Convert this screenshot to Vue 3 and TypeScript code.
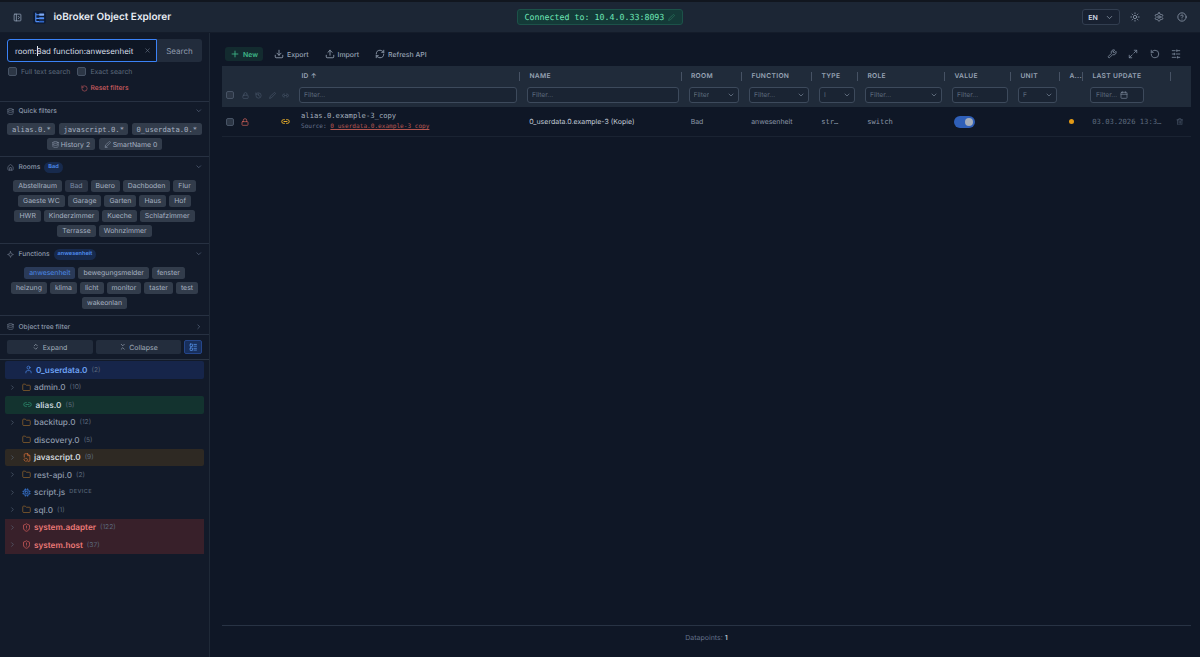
<script setup lang="ts">
interface TreeRow {
  label: string
  count?: string
  icon: string
  tone: string
  arrow: boolean
  tag?: string
}
const quick = ['alias.0.*', 'javascript.0.*', '0_userdata.0.*']
const rooms = ['Abstellraum', 'Bad', 'Buero', 'Dachboden', 'Flur', 'Gaeste WC', 'Garage', 'Garten', 'Haus', 'Hof', 'HWR', 'Kinderzimmer', 'Kueche', 'Schlafzimmer', 'Terrasse', 'Wohnzimmer']
const functions = ['anwesenheit', 'bewegungsmelder', 'fenster', 'heizung', 'klima', 'licht', 'monitor', 'taster', 'test', 'wakeonlan']
const tree: TreeRow[] = [
  { label: '0_userdata.0', count: '(2)', icon: 'user', tone: 'blue', arrow: false },
  { label: 'admin.0', count: '(10)', icon: 'folder', tone: 'plain', arrow: true },
  { label: 'alias.0', count: '(5)', icon: 'link', tone: 'green', arrow: false },
  { label: 'backitup.0', count: '(12)', icon: 'folder', tone: 'plain', arrow: true },
  { label: 'discovery.0', count: '(5)', icon: 'folder', tone: 'plain', arrow: false },
  { label: 'javascript.0', count: '(9)', icon: 'filecode', tone: 'amber', arrow: true },
  { label: 'rest-api.0', count: '(2)', icon: 'folder', tone: 'plain', arrow: true },
  { label: 'script.js', icon: 'chip', tone: 'plain', arrow: true, tag: 'DEVICE' },
  { label: 'sql.0', count: '(1)', icon: 'folder', tone: 'plain', arrow: true },
  { label: 'system.adapter', count: '(122)', icon: 'shield', tone: 'red', arrow: true },
  { label: 'system.host', count: '(37)', icon: 'shield', tone: 'red', arrow: true }
]
const columns = [
  { label: 'ID ↑', filter: 'text', ph: 'Filter...' },
  { label: 'NAME', filter: 'text', ph: 'Filter...' },
  { label: 'ROOM', filter: 'select', ph: 'Filter' },
  { label: 'FUNCTION', filter: 'select', ph: 'Filter...' },
  { label: 'TYPE', filter: 'select', ph: 'I' },
  { label: 'ROLE', filter: 'select', ph: 'Filter...' },
  { label: 'VALUE', filter: 'text', ph: 'Filter...' },
  { label: 'UNIT', filter: 'select', ph: 'F' },
  { label: 'A...', filter: 'none', ph: '' },
  { label: 'LAST UPDATE', filter: 'date', ph: 'Filter...' }
]
</script>

<template>
  <div class="app">
    <svg class="defs" aria-hidden="true">
      <symbol id="i-panel" viewBox="0 0 24 24"><rect x="3" y="3" width="18" height="18" rx="2"/><path d="M9 3v18M14 9l3 3-3 3"/></symbol>
      <symbol id="i-plus" viewBox="0 0 24 24"><path d="M5 12h14M12 5v14"/></symbol>
      <symbol id="i-download" viewBox="0 0 24 24"><path d="M12 15V3M21 15v4a2 2 0 0 1-2 2H5a2 2 0 0 1-2-2v-4M7 10l5 5 5-5"/></symbol>
      <symbol id="i-upload" viewBox="0 0 24 24"><path d="M12 3v12M17 8l-5-5-5 5M21 15v4a2 2 0 0 1-2 2H5a2 2 0 0 1-2-2v-4"/></symbol>
      <symbol id="i-refresh" viewBox="0 0 24 24"><path d="M3 12a9 9 0 0 1 9-9 9.75 9.75 0 0 1 6.74 2.74L21 8M21 3v5h-5M21 12a9 9 0 0 1-9 9 9.75 9.75 0 0 1-6.74-2.74L3 16M8 16H3v5"/></symbol>
      <symbol id="i-wrench" viewBox="0 0 24 24"><path d="M14.7 6.3a1 1 0 0 0 0 1.4l1.6 1.6a1 1 0 0 0 1.4 0l3.77-3.77a6 6 0 0 1-7.94 7.94l-6.91 6.91a2.12 2.12 0 0 1-3-3l6.91-6.91a6 6 0 0 1 7.94-7.94l-3.76 3.76z"/></symbol>
      <symbol id="i-max" viewBox="0 0 24 24"><path d="M15 3h6v6M9 21H3v-6M21 3l-7 7M3 21l7-7"/></symbol>
      <symbol id="i-rotate" viewBox="0 0 24 24"><path d="M3 12a9 9 0 1 0 9-9 9.75 9.75 0 0 0-6.74 2.74L3 8M3 3v5h5"/></symbol>
      <symbol id="i-sliders" viewBox="0 0 24 24"><path d="M21 4h-7M10 4H3M21 12h-9M8 12H3M21 20h-5M12 20H3M14 2v4M8 10v4M16 18v4"/></symbol>
      <symbol id="i-lock" viewBox="0 0 24 24"><rect x="3" y="11" width="18" height="11" rx="2"/><path d="M7 11V7a5 5 0 0 1 10 0v4"/></symbol>
      <symbol id="i-history" viewBox="0 0 24 24"><path d="M3 12a9 9 0 1 0 9-9 9.75 9.75 0 0 0-6.74 2.74L3 8M3 3v5h5M12 7v5l4 2"/></symbol>
      <symbol id="i-pen" viewBox="0 0 24 24"><path d="M17 3a2.85 2.83 0 1 1 4 4L7.5 20.5 2 22l1.5-5.5Z"/></symbol>
      <symbol id="i-link" viewBox="0 0 24 24"><path d="M9 17H7A5 5 0 0 1 7 7h2M15 7h2a5 5 0 1 1 0 10h-2M8 12h8"/></symbol>
      <symbol id="i-trash" viewBox="0 0 24 24"><path d="M3 6h18M19 6v14a2 2 0 0 1-2 2H7a2 2 0 0 1-2-2V6M8 6V4a2 2 0 0 1 2-2h4a2 2 0 0 1 2 2v2M10 11v6M14 11v6"/></symbol>
      <symbol id="i-calendar" viewBox="0 0 24 24"><rect x="3" y="4" width="18" height="18" rx="2"/><path d="M16 2v4M8 2v4M3 10h18"/></symbol>
      <symbol id="i-down" viewBox="0 0 24 24"><path d="m6 9 6 6 6-6"/></symbol>
      <symbol id="i-right" viewBox="0 0 24 24"><path d="m9 18 6-6-6-6"/></symbol>
      <symbol id="i-folder" viewBox="0 0 24 24"><path d="M20 20a2 2 0 0 0 2-2V8a2 2 0 0 0-2-2h-7.9a2 2 0 0 1-1.69-.9L9.6 3.9A2 2 0 0 0 7.93 3H4a2 2 0 0 0-2 2v13a2 2 0 0 0 2 2Z"/></symbol>
      <symbol id="i-user" viewBox="0 0 24 24"><path d="M19 21v-2a4 4 0 0 0-4-4H9a4 4 0 0 0-4 4v2"/><circle cx="12" cy="7" r="4"/></symbol>
      <symbol id="i-shield" viewBox="0 0 24 24"><path d="M20 13c0 5-3.5 7.5-7.66 8.95a1 1 0 0 1-.67-.01C7.5 20.5 4 18 4 13V6a1 1 0 0 1 1-1c2 0 4.5-1.2 6.24-2.72a1.17 1.17 0 0 1 1.52 0C14.51 3.81 17 5 19 5a1 1 0 0 1 1 1zM12 8v4M12 16h.01"/></symbol>
      <symbol id="i-sun" viewBox="0 0 24 24"><circle cx="12" cy="12" r="4"/><path d="M12 2v2M12 20v2M4.93 4.93l1.41 1.41M17.66 17.66l1.41 1.41M2 12h2M20 12h2M6.34 17.66l-1.41 1.41M19.07 4.93l-1.41 1.41"/></symbol>
      <symbol id="i-gear" viewBox="0 0 24 24"><path d="M12.22 2h-.44a2 2 0 0 0-2 2v.18a2 2 0 0 1-1 1.73l-.43.25a2 2 0 0 1-2 0l-.15-.08a2 2 0 0 0-2.73.73l-.22.38a2 2 0 0 0 .73 2.73l.15.1a2 2 0 0 1 1 1.72v.51a2 2 0 0 1-1 1.74l-.15.09a2 2 0 0 0-.73 2.73l.22.38a2 2 0 0 0 2.73.73l.15-.08a2 2 0 0 1 2 0l.43.25a2 2 0 0 1 1 1.73V20a2 2 0 0 0 2 2h.44a2 2 0 0 0 2-2v-.18a2 2 0 0 1 1-1.73l.43-.25a2 2 0 0 1 2 0l.15.08a2 2 0 0 0 2.73-.73l.22-.39a2 2 0 0 0-.73-2.73l-.15-.08a2 2 0 0 1-1-1.74v-.5a2 2 0 0 1 1-1.74l.15-.09a2 2 0 0 0 .73-2.73l-.22-.38a2 2 0 0 0-2.73-.73l-.15.08a2 2 0 0 1-2 0l-.43-.25a2 2 0 0 1-1-1.73V4a2 2 0 0 0-2-2z"/><circle cx="12" cy="12" r="3"/></symbol>
      <symbol id="i-help" viewBox="0 0 24 24"><circle cx="12" cy="12" r="10"/><path d="M9.09 9a3 3 0 0 1 5.83 1c0 2-3 3-3 3M12 17h.01"/></symbol>
      <symbol id="i-db" viewBox="0 0 24 24"><ellipse cx="12" cy="5" rx="9" ry="3"/><path d="M3 5v14a9 3 0 0 0 18 0V5M3 12a9 3 0 0 0 18 0"/></symbol>
      <symbol id="i-home" viewBox="0 0 24 24"><path d="M15 21v-8a1 1 0 0 0-1-1h-4a1 1 0 0 0-1 1v8M3 10a2 2 0 0 1 .709-1.528l7-5.999a2 2 0 0 1 2.582 0l7 5.999A2 2 0 0 1 21 10v9a2 2 0 0 1-2 2H5a2 2 0 0 1-2-2z"/></symbol>
      <symbol id="i-func" viewBox="0 0 24 24"><path d="M12 2l2.8 7.2L22 12l-7.2 2.8L12 22l-2.8-7.2L2 12l7.2-2.8z"/></symbol>
      <symbol id="i-expand" viewBox="0 0 24 24"><path d="m7 15 5 5 5-5M7 9l5-5 5 5"/></symbol>
      <symbol id="i-collapse" viewBox="0 0 24 24"><path d="m7 20 5-5 5 5M7 4l5 5 5-5"/></symbol>
      <symbol id="i-x" viewBox="0 0 24 24"><path d="M18 6 6 18M6 6l12 12"/></symbol>
      <symbol id="i-tag" viewBox="0 0 24 24"><path d="M17 3a2.85 2.83 0 1 1 4 4L9 19l-5 1 1-5z"/><path d="M4 22h7"/></symbol>
      <symbol id="i-filecode" viewBox="0 0 24 24"><path d="M6 11V4a2 2 0 0 1 2-2h8l5 5v13a2 2 0 0 1-2 2h-3"/><path d="M15 2v5h5M9 14l-4 4 4 4M12 14l3 4-3 4"/></symbol>
      <symbol id="i-chip" viewBox="0 0 24 24"><rect x="5" y="5" width="14" height="14" rx="3"/><rect x="9" y="9" width="6" height="6" rx="1"/><path d="M9 2v3M15 2v3M9 19v3M15 19v3M2 9h3M2 15h3M19 9h3M19 15h3"/></symbol>
      <symbol id="i-columns" viewBox="0 0 24 24"><rect x="3" y="3" width="7" height="7" rx="1"/><rect x="3" y="14" width="7" height="7" rx="1"/><path d="M14 4h7M14 9h7M14 15h7M14 20h7"/></symbol>
    </svg>

    <header class="topbar">
      <div class="brand">
        <svg class="ic panel-ic"><use href="#i-panel"/></svg>
        <span class="logo">
          <svg viewBox="0 0 14 14" class="logo-svg">
            <path d="M3 2v9.5M3 4h4M3 8h4M3 11.5h4" stroke="#4f8df7" stroke-width="1.2" fill="none"/>
            <rect x="6.6" y="2.8" width="5.4" height="2.2" rx=".6" fill="#7ea9f5"/>
            <rect x="6.6" y="6.8" width="5.4" height="2.2" rx=".6" fill="#4f8df7"/>
            <rect x="6.6" y="10.4" width="5.4" height="2" rx=".6" fill="#2f66c9"/>
          </svg>
        </span>
        <h1>ioBroker Object Explorer</h1>
      </div>
      <div class="conn">
        <span>Connected to: 10.4.0.33:8093</span>
        <svg class="ic conn-pen"><use href="#i-pen"/></svg>
      </div>
      <div class="top-actions">
        <div class="lang"><span>EN</span><svg class="ic lang-ch"><use href="#i-down"/></svg></div>
        <svg class="ic top-ic"><use href="#i-sun"/></svg>
        <svg class="ic top-ic"><use href="#i-gear"/></svg>
        <svg class="ic top-ic"><use href="#i-help"/></svg>
      </div>
    </header>

    <div class="body">
      <aside class="sidebar">
        <section class="search">
          <div class="search-row">
            <div class="search-input">
              <span class="search-text">room:<i class="caret"></i>Bad function:anwesenheit</span>
              <svg class="ic clear"><use href="#i-x"/></svg>
            </div>
            <div class="search-btn">Search</div>
          </div>
          <div class="checks">
            <label><i class="box"></i>Full text search</label>
            <label><i class="box"></i>Exact search</label>
          </div>
          <div class="reset"><svg class="ic reset-ic"><use href="#i-rotate"/></svg>Reset filters</div>
        </section>

        <section class="panel quick">
          <div class="panel-head">
            <svg class="ic head-ic"><use href="#i-db"/></svg>
            <span>Quick filters</span>
            <svg class="ic head-ch"><use href="#i-down"/></svg>
          </div>
          <div class="chips">
            <span v-for="q in quick" :key="q" class="chip mono">{{ q }}</span>
            <span class="chip"><svg class="ic chip-ic"><use href="#i-db"/></svg>History 2</span>
            <span class="chip"><svg class="ic chip-ic"><use href="#i-tag"/></svg>SmartName 0</span>
          </div>
        </section>

        <section class="panel rooms">
          <div class="panel-head">
            <svg class="ic head-ic"><use href="#i-home"/></svg>
            <span>Rooms</span>
            <em class="pill">Bad</em>
            <svg class="ic head-ch"><use href="#i-down"/></svg>
          </div>
          <div class="chips">
            <span v-for="r in rooms" :key="r" class="chip" :class="{ 'chip-soft': r === 'Bad' }">{{ r }}</span>
          </div>
        </section>

        <section class="panel funcs">
          <div class="panel-head">
            <svg class="ic head-ic"><use href="#i-func"/></svg>
            <span>Functions</span>
            <em class="pill">anwesenheit</em>
            <svg class="ic head-ch"><use href="#i-down"/></svg>
          </div>
          <div class="chips">
            <span v-for="f in functions" :key="f" class="chip" :class="{ 'chip-on': f === 'anwesenheit' }">{{ f }}</span>
          </div>
        </section>

        <section class="panel treehead">
          <div class="panel-head">
            <svg class="ic head-ic"><use href="#i-db"/></svg>
            <span>Object tree filter</span>
            <svg class="ic head-ch"><use href="#i-right"/></svg>
          </div>
        </section>

        <section class="tree-tools">
          <div class="tool"><svg class="ic tool-ic"><use href="#i-expand"/></svg>Expand</div>
          <div class="tool"><svg class="ic tool-ic"><use href="#i-collapse"/></svg>Collapse</div>
          <div class="tool-toggle"><svg class="ic toggle-ic"><use href="#i-columns"/></svg></div>
        </section>

        <div class="tree">
          <div v-for="row in tree" :key="row.label" class="tree-row" :class="'t-' + row.tone">
            <span class="arrow">
              <svg v-if="row.arrow" class="ic arrow-ic"><use href="#i-right"/></svg>
            </span>
            <svg class="ic tree-ic" :class="'k-' + row.icon"><use :href="'#i-' + row.icon"/></svg>
            <span class="tree-label">{{ row.label }}</span>
            <span v-if="row.count" class="tree-count">{{ row.count }}</span>
            <span v-if="row.tag" class="tree-tag">{{ row.tag }}</span>
          </div>
        </div>
      </aside>

      <main class="main">
        <div class="toolbar">
          <div class="btn-new"><svg class="ic tb-ic"><use href="#i-plus"/></svg>New</div>
          <div class="tb"><svg class="ic tb-ic"><use href="#i-download"/></svg>Export</div>
          <div class="tb"><svg class="ic tb-ic"><use href="#i-upload"/></svg>Import</div>
          <div class="tb"><svg class="ic tb-ic"><use href="#i-refresh"/></svg>Refresh API</div>
          <div class="tb-right">
            <svg class="ic tr-ic"><use href="#i-wrench"/></svg>
            <svg class="ic tr-ic"><use href="#i-max"/></svg>
            <svg class="ic tr-ic"><use href="#i-rotate"/></svg>
            <svg class="ic tr-ic"><use href="#i-sliders"/></svg>
          </div>
        </div>

        <div class="table">
          <div class="grid thead">
            <div class="th-tools">
              <i class="box box-h"></i>
              <svg class="ic th-ic th-first"><use href="#i-lock"/></svg>
              <svg class="ic th-ic"><use href="#i-history"/></svg>
              <svg class="ic th-ic"><use href="#i-pen"/></svg>
              <svg class="ic th-ic"><use href="#i-link"/></svg>
            </div>
            <div v-for="c in columns" :key="c.label" class="th">
              <div class="th-label">{{ c.label }}</div>
              <div v-if="c.filter !== 'none'" class="filter" :class="'f-' + c.filter">
                <span>{{ c.ph }}</span>
                <svg v-if="c.filter === 'select'" class="ic filter-ic"><use href="#i-down"/></svg>
                <svg v-if="c.filter === 'date'" class="ic filter-ic"><use href="#i-calendar"/></svg>
              </div>
            </div>
            <div></div>
          </div>

          <div class="grid trow">
            <div class="row-tools">
              <i class="box box-r"></i>
              <svg class="ic row-lock"><use href="#i-lock"/></svg>
              <svg class="ic row-link"><use href="#i-link"/></svg>
            </div>
            <div class="cell-id">
              <div class="id-main">alias.0.example-3_copy</div>
              <div class="id-src">Source: <u>0_userdata.0.example-3_copy</u></div>
            </div>
            <div class="cell cell-name">0_userdata.0.example-3 (Kopie)</div>
            <div class="cell">Bad</div>
            <div class="cell">anwesenheit</div>
            <div class="cell mono-cell">str…</div>
            <div class="cell mono-cell">switch</div>
            <div class="cell"><span class="toggle"><i></i></span></div>
            <div class="cell"></div>
            <div class="cell"><i class="dot"></i></div>
            <div class="cell date">03.03.2026 13:3…</div>
            <div class="cell cell-trash"><svg class="ic row-trash"><use href="#i-trash"/></svg></div>
          </div>
        </div>

        <footer class="foot">Datapoints: <b>1</b></footer>
      </main>
    </div>
  </div>
</template>

<style>
html, body { margin: 0; padding: 0; background: #0f1726; }
</style>

<style scoped>
.defs { width: 0; height: 0; display: block; overflow: hidden; }
.app {
  height: 657px; width: 1200px; overflow: hidden; display: flex; flex-direction: column;
  background: #0f1726; color: #cbd5e1; font-family: Inter, "Noto Sans", sans-serif; font-size: 7px;
  text-rendering: geometricPrecision;
}
.ic { fill: none; stroke: currentColor; stroke-width: 2; stroke-linecap: round; stroke-linejoin: round; flex: none; }
.mono { font-family: "DejaVu Sans Mono", monospace; }

.topbar {
  height: 31px; margin-top: 2px; flex: none; display: flex; align-items: center; padding: 0 13px 0 13px; box-sizing: border-box;
  background: #1c2635; border-bottom: 1px solid #141c2a; box-shadow: 0 -2px 0 #11161f;
}
.brand { display: flex; align-items: center; width: 504px; }
.panel-ic { width: 9px; height: 9px; color: #94a3b8; }
.logo { width: 13px; height: 13px; margin-left: 11px; background: #0f1c33; border-radius: 3px; display: flex; }
.logo-svg { width: 13px; height: 13px; }
h1 { margin: 0 0 0 7.5px; font-size: 10px; font-weight: 600; color: #e8edf4; white-space: nowrap; }
.conn {
  height: 16px; width: 166px; box-sizing: border-box; display: flex; align-items: center; gap: 4px; padding-left: 6.5px;
  background: #143a38; border: 1px solid #1c5249; border-radius: 3px; color: #6ee7b7;
  font-family: "DejaVu Sans Mono", monospace; font-size: 8.3px; white-space: nowrap;
}
.conn-pen { width: 7px; height: 7px; color: #2f7d64; }
.top-actions { margin-left: auto; display: flex; align-items: center; }
.lang {
  width: 38px; height: 16px; box-sizing: border-box; border: 1px solid #323e50; border-radius: 3px; display: flex; align-items: center;
  padding: 0 5px; justify-content: space-between; color: #d3dae4; font-size: 7px; font-weight: 600; margin-right: 10px; background: #182131;
}
.lang-ch { width: 9px; height: 9px; color: #8c98a9; }
.top-ic { width: 10px; height: 10px; color: #8a96a8; margin-right: 13.4px; }
.top-ic:last-child { margin-right: 0; }

.body { flex: 1; display: flex; min-height: 0; }
.sidebar { width: 209px; flex: none; border-right: 1px solid #1f2937; display: flex; flex-direction: column; background: #121a29; }
.search { padding: 6px 7px 0; height: 69px; box-sizing: border-box; border-bottom: 1px solid #273142; flex: none; }
.search-row { display: flex; height: 23px; }
.search-input {
  width: 150px; box-sizing: border-box; border: 1px solid #3b82f6; border-radius: 3px 0 0 3px; background: #0e1624;
  display: flex; align-items: center; padding: 0 5px 0 7px; color: #d6dde7; font-size: 7.9px; white-space: nowrap;
}
.search-text { flex: 1; }
.caret { display: inline-block; width: 1px; height: 10px; background: #e2e8f0; vertical-align: -2px; margin-right: -1px; }
.clear { width: 7px; height: 7px; color: #6b7789; }
.search-btn { flex: 1; background: #222c3c; border-radius: 0 3px 3px 0; color: #8f9bad; font-size: 8px; display: flex; align-items: center; justify-content: center; }
.checks { display: flex; gap: 7px; margin: 5px 0 0 1px; color: #5d6a7c; font-size: 6.9px; }
.checks label { display: flex; align-items: center; gap: 4px; }
.box { display: inline-block; width: 9px; height: 9px; box-sizing: border-box; background: #2c3645; border: 1px solid #475365; border-radius: 2px; flex: none; }
.reset { display: flex; align-items: center; justify-content: center; gap: 3px; color: #c85a5e; font-size: 6.67px; margin-top: 8px; font-weight: 500; }
.reset-ic { width: 7px; height: 7px; }

.panel { border-bottom: 1px solid #273142; padding: 0 7px; box-sizing: border-box; flex: none; }
.quick { height: 55px; }
.rooms { height: 87px; }
.funcs { height: 72px; }
.treehead { height: 19px; }
.panel-head { display: flex; align-items: center; gap: 3px; height: 20px; color: #8a96a8; font-size: 6.67px; font-weight: 500; }
.quick .panel-head { height: 18px; }
.treehead .panel-head { height: 21px; }
.head-ic { width: 7px; height: 7px; color: #788598; margin-right: 1.5px; }
.head-ch { width: 7.5px; height: 7.5px; margin-left: auto; color: #64728a; }
.pill { font-style: normal; background: #172a4d; color: #4f8ef0; border-radius: 6px; height: 11px; line-height: 11px; padding: 0 4px; font-size: 5.6px; font-weight: 600; margin-left: 1px; }
.chips { display: flex; flex-wrap: wrap; justify-content: center; gap: 3px; margin-top: 3px; }
.quick .chips { gap: 3px 3.5px; }
.rooms .chips, .funcs .chips { margin-top: 2.5px; }
.chip {
  height: 12px; box-sizing: border-box; padding: 0 5px; background: #323c4b; color: #a7b2c2; border-radius: 2.5px; font-size: 6.9px;
  display: inline-flex; align-items: center; gap: 2px; white-space: nowrap;
}
.chip.mono { font-size: 7.2px; padding: 0 4.5px; }
.chip-ic { width: 7px; height: 7px; color: #8a96a8; }
.chip-soft { background: #2a3343; color: #7c8ba3; }
.chip-on { background: #2a3a58; color: #4b8ae8; }

.tree-tools { display: flex; gap: 3px; padding: 5px 7px; border-bottom: 1px solid #2b3544; flex: none; height: 25px; box-sizing: border-box; }
.tool { flex: 1; background: #232d3d; border-radius: 2px; display: flex; align-items: center; justify-content: center; gap: 3px; color: #a2adbc; font-size: 7px; }
.tool-ic { width: 7.5px; height: 7.5px; }
.tool-toggle { width: 18px; background: #182f5c; border: 1px solid #25468a; box-sizing: border-box; border-radius: 2px; display: flex; align-items: center; justify-content: center; flex: none; }
.toggle-ic { width: 8.5px; height: 8.5px; color: #5b9bf5; }

.tree { padding: 1px 5px 0; flex: 1; }
.tree-row { height: 17.5px; display: flex; align-items: center; color: #8d99aa; font-size: 8.2px; font-weight: 500; border-radius: 2px; }
.arrow { width: 12px; display: flex; justify-content: center; padding-left: 1px; flex: none; }
.arrow-ic { width: 7px; height: 7px; color: #5f6d80; }
.tree-ic { width: 9px; height: 9px; margin: 0 3px 0 4px; stroke-width: 1.8; }
.k-folder { color: #9b6a2c; }
.k-user { color: #4e8cef; margin-left: 5.5px; margin-right: 3.5px; }
.k-link { color: #2f9a78; margin-left: 5px; margin-right: 3.5px; }
.k-filecode { color: #e0743a; }
.k-chip { color: #3a7de0; }
.k-shield { color: #e2625f; }
.tree-count { color: #5a677a; font-size: 6.67px; margin-left: 4px; font-weight: 400; }
.tree-tag { color: #586578; font-size: 5.6px; margin-left: 4px; letter-spacing: .4px; font-weight: 500; }
.t-blue { background: #16254a; }
.t-blue .tree-label { color: #6ea3f5; font-weight: 600; }
.t-green { background: #13332f; }
.t-green .tree-label { color: #c4d2da; font-weight: 600; }
.t-amber { background: #2e2923; }
.t-amber .tree-label { color: #cfd6dd; font-weight: 600; }
.t-red { background: #38202a; border-radius: 0; }
.t-red .tree-label { color: #ec7a78; font-weight: 600; }

.main { flex: 1; min-width: 0; display: flex; flex-direction: column; padding: 0 9px 0 12px; }
.toolbar { height: 33px; box-sizing: border-box; padding-top: 9px; flex: none; display: flex; align-items: center; gap: 16px; color: #98a4b5; font-size: 6.9px; font-weight: 500; }
.btn-new { display: flex; align-items: center; gap: 3px; height: 14px; padding: 0 5px; background: #132b2f; color: #3fb98a; border-radius: 3px; font-weight: 600; margin-left: 3px; margin-right: -5px; }
.tb { display: flex; align-items: center; gap: 3px; }
.tb-ic { width: 10px; height: 10px; }
.tb-right { margin-left: auto; display: flex; align-items: center; gap: 11.5px; padding-right: 10px; color: #7c899b; }
.tr-ic { width: 10px; height: 10px; }

.grid { display: grid; grid-template-columns: 70px 228px 161.5px 60.5px 70px 46px 87px 66px 49px 23px 87.5px 20.5px; }
.thead { height: 41px; background: #202b3a; }
.th-tools { display: flex; align-items: center; padding: 17px 0 0 4px; gap: 6.5px; color: #4e5b6e; }
.th-ic { width: 7px; height: 7px; }
.th-first { margin-left: 1px; }
.box-h { width: 8px; height: 8px; }
.th { position: relative; padding-left: 7px; min-width: 0; }
.th-label { height: 20px; line-height: 20px; margin: 0 0 1.3px 2.4px; color: #98a4b5; font-size: 6.67px; font-weight: 600; letter-spacing: .33px; white-space: nowrap; overflow: hidden; }
.th::after { content: ""; position: absolute; right: 0; top: 5.5px; height: 9px; width: 1px; background: #465264; }
.filter {
  height: 16px; box-sizing: border-box; margin-right: 3px; border: 1px solid #3d4a5c; border-radius: 3px; display: flex; align-items: center;
  justify-content: space-between; padding: 0 3px 0 4px; color: #5d6a7d; font-size: 6.67px; background: #1a2433;
}
.f-date { justify-content: flex-start; gap: 3px; margin-right: 27px; padding-left: 5px; }
.filter span { overflow: hidden; white-space: nowrap; }
.filter-ic { width: 8px; height: 8px; color: #7c899b; }

.trow { height: 30px; box-sizing: border-box; border-bottom: 1px solid #1a2332; }
.row-tools { display: flex; align-items: center; padding-left: 4px; }
.box-r { width: 8px; height: 8px; }
.row-lock { width: 8px; height: 8px; margin-left: 7px; color: #d8655c; }
.row-link { width: 9px; height: 9px; margin-left: 32px; color: #eab02a; stroke-width: 2.6; }
.cell-id { padding: 4px 0 0 9px; font-family: "DejaVu Sans Mono", monospace; }
.id-main { font-size: 7.2px; color: #a4afbe; line-height: 10px; }
.id-src { font-size: 6.1px; color: #64718a; line-height: 11px; white-space: nowrap; }
.id-src u { color: #b55650; }
.cell { display: flex; align-items: center; padding-left: 9.2px; color: #8c98a9; font-size: 6.9px; white-space: nowrap; min-width: 0; }
.cell-name { color: #c3ccd8; font-size: 7px; }
.mono-cell { font-family: "DejaVu Sans Mono", monospace; font-size: 7.1px; color: #8c98a9; }
.toggle { width: 21px; height: 12px; background: #2f5fb8; border-radius: 6px; display: flex; align-items: center; justify-content: flex-end; padding-right: 2px; box-sizing: border-box; }
.toggle i { width: 8px; height: 8px; background: #a5adb9; border-radius: 50%; }
.dot { display: block; flex: none; width: 5px; height: 5px; background: #e39a16; border-radius: 50%; }
.date { font-family: "DejaVu Sans Mono", monospace; color: #5e6b7e; font-size: 7.2px; }
.cell-trash { padding-left: 5.6px; }
.row-trash { width: 7.5px; height: 7.5px; color: #4e5b6e; }

.foot { margin-top: auto; height: 32px; padding-bottom: 8px; border-top: 1px solid #283344; display: flex; align-items: center; justify-content: center; color: #64718a; font-size: 7px; box-sizing: border-box; white-space: pre; }
.foot b { color: #b6c0cd; font-weight: 600; }
</style>
